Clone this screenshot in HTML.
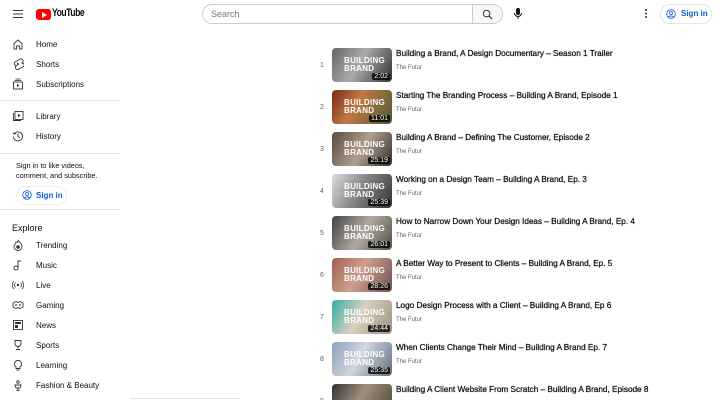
<!DOCTYPE html>
<html><head><meta charset="utf-8"><style>
*{box-sizing:border-box;margin:0;padding:0}
html,body{width:720px;height:400px;overflow:hidden}
body{background:#fff;font-family:"Liberation Sans",sans-serif;color:#0f0f0f;position:relative}
.a{position:absolute}
.nav{position:absolute;left:36px;font-size:8px;color:#0f0f0f}
.ic{position:absolute;left:12px;width:12px;height:12px}
.sep{position:absolute;left:0;width:120px;height:1px;background:#e5e5e5}
.row{position:absolute;left:318px;height:38px;width:400px;overflow:hidden}
.num{position:absolute;left:0;top:14px;width:8px;text-align:center;font-size:7px;color:#606060}
.th{position:absolute;left:14px;top:0;width:60px;height:34px;border-radius:4px;overflow:hidden}
.th b{position:absolute;left:12px;top:9px;color:#fff;font-size:8px;line-height:8px;font-weight:bold;letter-spacing:.3px}
.du{position:absolute;right:2px;bottom:2px;background:rgba(0,0,0,.8);color:#fff;font-size:7px;padding:0 2px;border-radius:2px}
.t{position:absolute;left:78px;top:1px;font-size:8.2px;-webkit-text-stroke:.25px #0f0f0f;white-space:nowrap}
.c{position:absolute;left:78px;top:17px;font-size:6px;color:#606060}
</style></head><body>
<div class="a" style="left:13px;top:10px;width:10px;height:1.3px;background:#333;box-shadow:0 3.5px 0 #333,0 7px 0 #333"></div>
<div class="a" style="left:36px;top:9px;width:15px;height:11px;background:#f00;border-radius:3px"></div>
<div class="a" style="left:41.5px;top:11.5px;width:0;height:0;border-left:5px solid #fff;border-top:3px solid transparent;border-bottom:3px solid transparent"></div>
<div class="a" style="left:52px;top:7px;font-size:11px;font-weight:bold;letter-spacing:-.6px;transform:scaleX(.78);transform-origin:left">YouTube</div>
<div class="a" style="left:202px;top:4px;width:301px;height:20px;border:1px solid #ccc;border-radius:10px;overflow:hidden">
 <div class="a" style="left:8px;top:4px;font-size:9px;color:#777">Search</div>
 <div class="a" style="left:269px;top:0;width:32px;height:20px;background:#f8f8f8;border-left:1px solid #ccc"></div>
 <svg class="a" style="left:279px;top:4px" width="11" height="11" viewBox="0 0 12 12"><circle cx="5" cy="5" r="3.6" fill="none" stroke="#222" stroke-width="1"/><path d="M7.6 7.6L11 11" stroke="#222" stroke-width="1.1"/></svg>
</div>
<svg class="a" style="left:513px;top:8px" width="10" height="12" viewBox="0 0 10 12"><rect x="3" y="0" width="4" height="7" rx="2" fill="#111"/><path d="M1.5 5a3.5 3.5 0 0 0 7 0M5 8.5V11" stroke="#111" fill="none"/></svg>
<div class="a" style="left:645px;top:9px;width:2px;height:2px;background:#333;border-radius:1px;box-shadow:0 3.5px 0 #333,0 7px 0 #333"></div>
<div class="a" style="left:660px;top:4px;width:52px;height:20px;border:1px solid #e5e5e5;border-radius:10px"></div>
<svg class="a" style="left:666px;top:9px" width="10" height="10" viewBox="0 0 10 10"><circle cx="5" cy="5" r="4.3" fill="none" stroke="#065fd4" stroke-width=".8"/><circle cx="5" cy="4" r="1.5" fill="none" stroke="#065fd4" stroke-width=".8"/><path d="M2.3 8a3.3 2.5 0 0 1 5.4 0" fill="none" stroke="#065fd4" stroke-width=".8"/></svg>
<div class="a" style="left:681px;top:9px;font-size:8px;color:#065fd4;font-weight:bold">Sign in</div>
<svg class="ic" style="top:38px" viewBox="0 0 12 12"><path d="M2 5.5L6 2l4 3.5V11H7.5V8h-3v3H2z" fill="none" stroke="#333" stroke-width=".9"/></svg>
<div class="nav" style="top:40px">Home</div>
<svg class="ic" style="top:58px" viewBox="0 0 12 12"><path d="M7.5 1.5L3 4a2 2 0 0 0 1.5 3.5L4 8a2 2 0 0 0 3 3l4.5-2.5a2 2 0 0 0-1.5-3.5l.5-.5a2 2 0 0 0-3-3z" fill="none" stroke="#333" stroke-width=".9"/><path d="M5 4.5v3l2.5-1.5z" fill="#333"/></svg>
<div class="nav" style="top:60px">Shorts</div>
<svg class="ic" style="top:78px" viewBox="0 0 12 12"><rect x="1.5" y="4" width="9" height="7" fill="none" stroke="#333" stroke-width=".9"/><path d="M2.5 2.5h7M3.5 1h5" stroke="#333" stroke-width=".8"/><path d="M5 6v3l2.5-1.5z" fill="#333"/></svg>
<div class="nav" style="top:80px">Subscriptions</div>
<div class="sep" style="top:100px"></div>
<svg class="ic" style="top:110px" viewBox="0 0 12 12"><rect x="3" y="1.5" width="8" height="8" fill="none" stroke="#333" stroke-width=".9"/><path d="M1.5 3v7.5H9" fill="none" stroke="#333" stroke-width=".9"/><path d="M6 3.7v3.6L8.7 5.5z" fill="#333"/></svg>
<div class="nav" style="top:112px">Library</div>
<svg class="ic" style="top:130px" viewBox="0 0 12 12"><path d="M2.2 4A4.5 4.5 0 1 1 1.5 6.5" fill="none" stroke="#333" stroke-width=".9"/><path d="M1 2.5l1.2 1.8 1.8-1" fill="none" stroke="#333" stroke-width=".8"/><path d="M6 3.5V6.3l2 1.5" fill="none" stroke="#333" stroke-width=".9"/></svg>
<div class="nav" style="top:132px">History</div>
<div class="sep" style="top:153px"></div>
<div class="a" style="left:16px;top:161px;font-size:7.3px;line-height:10px;color:#0f0f0f">Sign in to like videos,<br>comment, and subscribe.</div>
<div class="a" style="left:16px;top:186px;width:51px;height:19px;border:1px solid #eee;border-radius:10px"></div>
<svg class="a" style="left:22px;top:190px" width="10" height="10" viewBox="0 0 10 10"><circle cx="5" cy="5" r="4.3" fill="none" stroke="#065fd4" stroke-width=".8"/><circle cx="5" cy="4" r="1.5" fill="none" stroke="#065fd4" stroke-width=".8"/><path d="M2.3 8a3.3 2.5 0 0 1 5.4 0" fill="none" stroke="#065fd4" stroke-width=".8"/></svg>
<div class="a" style="left:36px;top:191px;font-size:8px;color:#065fd4;font-weight:bold">Sign in</div>
<div class="sep" style="top:209px"></div>
<div class="a" style="left:12px;top:223px;font-size:9px">Explore</div>
<div class="nav" style="top:241px">Trending</div>
<div class="nav" style="top:261px">Music</div>
<div class="nav" style="top:281px">Live</div>
<div class="nav" style="top:301px">Gaming</div>
<div class="nav" style="top:321px">News</div>
<div class="nav" style="top:341px">Sports</div>
<div class="nav" style="top:361px">Learning</div>
<div class="nav" style="top:381px">Fashion &amp; Beauty</div>
<svg class="ic" style="top:239px" viewBox="0 0 12 12"><path d="M6 1c1 2 4 3.5 4 6.5a4 4 0 0 1-8 0C2 5.5 4 5 4 3c1 .5 2 1 2-2z" fill="none" stroke="#333" stroke-width=".9"/><circle cx="6" cy="8" r="1.8" fill="#333"/></svg>
<svg class="ic" style="top:259px" viewBox="0 0 12 12"><circle cx="4" cy="9" r="2" fill="none" stroke="#333" stroke-width=".9"/><path d="M6 9V2h3" fill="none" stroke="#333" stroke-width=".9"/></svg>
<svg class="ic" style="top:279px" viewBox="0 0 12 12"><circle cx="6" cy="6" r="1.2" fill="#333"/><path d="M3.5 3.5a3.5 3.5 0 0 0 0 5M8.5 3.5a3.5 3.5 0 0 1 0 5M2 2a5.5 5.5 0 0 0 0 8M10 2a5.5 5.5 0 0 1 0 8" fill="none" stroke="#333" stroke-width=".8"/></svg>
<svg class="ic" style="top:299px" viewBox="0 0 12 12"><path d="M1 4l3-1.5 2 1 2-1L11 4v4l-3 1.5-2-1-2 1L1 8z" fill="none" stroke="#333" stroke-width=".9"/><circle cx="4" cy="6" r=".9" fill="#333"/><circle cx="8" cy="6" r=".9" fill="#333"/></svg>
<svg class="ic" style="top:319px" viewBox="0 0 12 12"><rect x="1.5" y="1.5" width="9" height="9" fill="none" stroke="#333" stroke-width=".9"/><rect x="3" y="3" width="6" height="2" fill="#333"/><rect x="3" y="6" width="3" height="3" fill="#333"/></svg>
<svg class="ic" style="top:339px" viewBox="0 0 12 12"><path d="M3 1.5h6v3a3 3 0 0 1-6 0z" fill="none" stroke="#333" stroke-width=".9"/><path d="M6 7.5v2M4 10.5h4" stroke="#333" stroke-width=".9"/></svg>
<svg class="ic" style="top:359px" viewBox="0 0 12 12"><path d="M6 1.5a3.5 3.5 0 0 0-2 6.4V9.5h4V7.9A3.5 3.5 0 0 0 6 1.5zM4.5 11h3" fill="none" stroke="#333" stroke-width=".9"/></svg>
<svg class="ic" style="top:379px" viewBox="0 0 12 12"><circle cx="6" cy="3" r="1.3" fill="none" stroke="#333" stroke-width=".9"/><path d="M3 6h6l-1 3H4zM6 9v2.5M4.5 11.5h3" fill="none" stroke="#333" stroke-width=".9"/></svg>
<div class="a" style="left:130px;top:398px;width:110px;height:1px;background:#e5e5e5"></div>
<div class="row" style="top:48px"><div class="num">1</div><div class="th" style="background:linear-gradient(120deg,#666,#aaa 45%,#333)"><b>BUILDING<br>BRAND</b><span class="du">2:02</span></div><div class="t">Building a Brand, A Design Documentary – Season 1 Trailer</div><div class="c">The Futur</div></div>
<div class="row" style="top:90px"><div class="num">2</div><div class="th" style="background:linear-gradient(120deg,#7a2a18,#c07a40 40%,#4a5a3a)"><b>BUILDING<br>BRAND</b><span class="du">11:01</span></div><div class="t">Starting The Branding Process – Building A Brand, Episode 1</div><div class="c">The Futur</div></div>
<div class="row" style="top:132px"><div class="num">3</div><div class="th" style="background:linear-gradient(120deg,#5a4a40,#b0a090 50%,#3a3028)"><b>BUILDING<br>BRAND</b><span class="du">25:19</span></div><div class="t">Building A Brand – Defining The Customer, Episode 2</div><div class="c">The Futur</div></div>
<div class="row" style="top:174px"><div class="num">4</div><div class="th" style="background:linear-gradient(120deg,#ddd,#888 45%,#333)"><b>BUILDING<br>BRAND</b><span class="du">25:39</span></div><div class="t">Working on a Design Team – Building A Brand, Ep. 3</div><div class="c">The Futur</div></div>
<div class="row" style="top:216px"><div class="num">5</div><div class="th" style="background:linear-gradient(120deg,#444,#b0a8a0 50%,#554)"><b>BUILDING<br>BRAND</b><span class="du">26:01</span></div><div class="t">How to Narrow Down Your Design Ideas – Building A Brand, Ep. 4</div><div class="c">The Futur</div></div>
<div class="row" style="top:258px"><div class="num">6</div><div class="th" style="background:linear-gradient(120deg,#a06050,#d0a090 45%,#705050)"><b>BUILDING<br>BRAND</b><span class="du">28:26</span></div><div class="t">A Better Way to Present to Clients – Building A Brand, Ep. 5</div><div class="c">The Futur</div></div>
<div class="row" style="top:300px"><div class="num">7</div><div class="th" style="background:linear-gradient(120deg,#30b0a0,#d8d0c0 45%,#a09080)"><b>BUILDING<br>BRAND</b><span class="du">24:44</span></div><div class="t">Logo Design Process with a Client – Building A Brand, Ep 6</div><div class="c">The Futur</div></div>
<div class="row" style="top:342px"><div class="num">8</div><div class="th" style="background:linear-gradient(120deg,#8aa0b8,#d0d8e0 45%,#607080)"><b>BUILDING<br>BRAND</b><span class="du">25:35</span></div><div class="t">When Clients Change Their Mind – Building A Brand Ep. 7</div><div class="c">The Futur</div></div>
<div class="row" style="top:384px;height:16px"><div class="num">9</div><div class="th" style="background:linear-gradient(120deg,#333,#a09080 45%,#443)"></div><div class="t">Building A Client Website From Scratch – Building A Brand, Episode 8</div></div>
</body></html>
